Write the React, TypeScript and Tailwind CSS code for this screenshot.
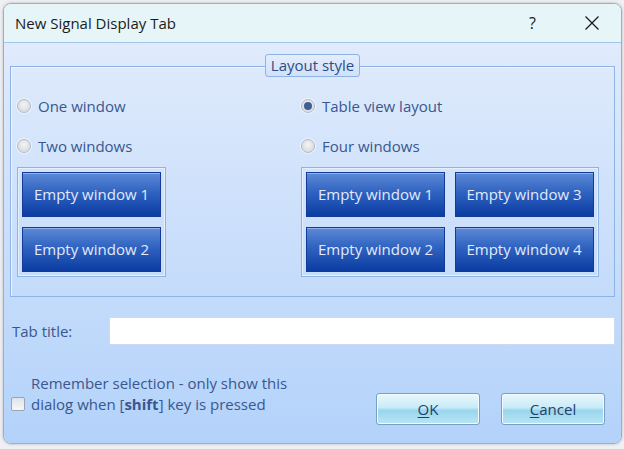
import React, { useState } from "react";

const font = { fontFamily: '"Open Sans", "Noto Sans", sans-serif' };

function Radio({ label, checked }: { label: string; checked?: boolean }) {
  return (
    <div className="flex h-[20px] items-center gap-[7px]">
      <span className="flex h-[14px] w-[14px] items-center justify-center rounded-full border border-[#b4bcc8] bg-[radial-gradient(circle_at_50%_40%,#f4f4f4_0%,#d9dde2_70%,#eef0f3_100%)] shadow-[0_0_0_1px_#eef3fb]">
        {checked && <span className="h-[8px] w-[8px] rounded-full bg-[#3f5f95]" />}
      </span>
      <span className="text-[15px] text-[#39578f]">{label}</span>
    </div>
  );
}

function WinButton({ label }: { label: string }) {
  return (
    <div className="flex h-[45px] w-[139px] items-center justify-center border border-[#123a96] bg-[linear-gradient(to_bottom,#5d89d7_0%,#2f63c0_45%,#0b3ca2_100%)] text-[15px] text-[#e2eafb] shadow-[inset_0_1px_0_#8fb0ea]">
      {label}
    </div>
  );
}

function DlgButton({ label }: { label: string }) {
  return (
    <button className="flex h-[32px] w-[104px] items-center justify-center rounded-[3px] border border-[#7d9fbe] bg-[linear-gradient(to_bottom,#e9f7fc_0%,#c8ebf7_45%,#99d6ee_55%,#b9e5f4_100%)] text-[15px] text-[#24406a] shadow-[inset_0_0_0_1px_#f2fbff]">
      <span className="underline underline-offset-2">{label[0]}</span>
      {label.slice(1)}
    </button>
  );
}

export default function App() {
  const [title, setTitle] = useState("");

  return (
    <div className="h-[449px] w-[624px] overflow-hidden bg-[#eef0f3] pl-[3px] pt-[3px]" style={font}>
      <div className="flex h-[441px] w-[619px] flex-col overflow-hidden rounded-[8px] border border-[#a3adbb] shadow-[0_0_3px_rgba(0,0,0,0.25)]">
        {/* title bar */}
        <div className="flex h-[39px] shrink-0 items-center border-b border-[#a6c3ea] bg-[#e6f6f8] pl-[11px] text-[15px] text-[#1b1b1b]">
          <span>New Signal Display Tab</span>
          <span className="ml-auto mr-[48px] text-[16px]">?</span>
          <svg width="16" height="16" viewBox="0 0 16 16" className="mr-[21px]">
            <path d="M1.5 1.5 L14.5 14.5 M14.5 1.5 L1.5 14.5" stroke="#1b1b1b" strokeWidth="1.3" />
          </svg>
        </div>

        {/* body */}
        <div className="flex flex-1 flex-col bg-[linear-gradient(to_bottom,#e0ebfc,#b3d2fa)] px-[6px] pt-[23px]">
          <div className="flex h-[231px] flex-col border border-[#8fb3e4] shadow-[inset_1px_1px_0_#eef4fd]">
            <div className="-mt-[13px] flex justify-center">
              <div className="flex h-[23px] items-center rounded-[3px] border border-[#8fb3e4] bg-[linear-gradient(to_bottom,#e4eefc,#cfe1fb)] px-[5px] text-[15px] text-[#2f4d84]">
                Layout style
              </div>
            </div>

            <div className="grid grid-cols-[284px_1fr] pl-[6px] pt-[19px]">
              <div className="flex flex-col">
                <Radio label="One window" />
                <div className="h-[20px]" />
                <Radio label="Two windows" />
                <div className="mt-[11px] flex w-[149px] flex-col gap-[10px] border border-[#8fb3e4] p-[4px] shadow-[inset_0_0_0_1px_#e4eefd]">
                  <WinButton label="Empty window 1" />
                  <WinButton label="Empty window 2" />
                </div>
              </div>
              <div className="flex flex-col">
                <Radio label="Table view layout" checked />
                <div className="h-[20px]" />
                <Radio label="Four windows" />
                <div className="mt-[11px] grid w-[298px] grid-cols-2 gap-x-[9px] gap-y-[10px] border border-[#8fb3e4] p-[4px] shadow-[inset_0_0_0_1px_#e4eefd]">
                  <WinButton label="Empty window 1" />
                  <WinButton label="Empty window 3" />
                  <WinButton label="Empty window 2" />
                  <WinButton label="Empty window 4" />
                </div>
              </div>
            </div>
          </div>

          {/* tab title */}
          <div className="mt-[20px] flex h-[28px] items-center">
            <label className="w-[99px] pl-[2px] text-[15px] text-[#39578f]">Tab title:</label>
            <input
              value={title}
              onChange={(e) => setTitle(e.target.value)}
              className="h-[28px] flex-1 border border-[#c9daf2] bg-white px-1 text-[15px] outline-none"
            />
          </div>

          {/* bottom */}
          <div className="mt-[28px] flex items-start">
            <div className="flex items-end">
              <span className="mb-[4px] ml-[1px] h-[14px] w-[14px] rounded-[2px] border border-[#9aa4b2] bg-[linear-gradient(to_bottom,#dfe3e8,#f6f7f9)]" />
              <div className="ml-[6px] text-[15px] leading-[21px] text-[#39578f]">
                <div>Remember selection - only show this</div>
                <div>
                  dialog when [<b className="font-bold">shift</b>] key is pressed
                </div>
              </div>
            </div>
            <div className="ml-auto mr-[10px] mt-[20px] flex gap-[21px]">
              <DlgButton label="OK" />
              <DlgButton label="Cancel" />
            </div>
          </div>
        </div>
      </div>
    </div>
  );
}
